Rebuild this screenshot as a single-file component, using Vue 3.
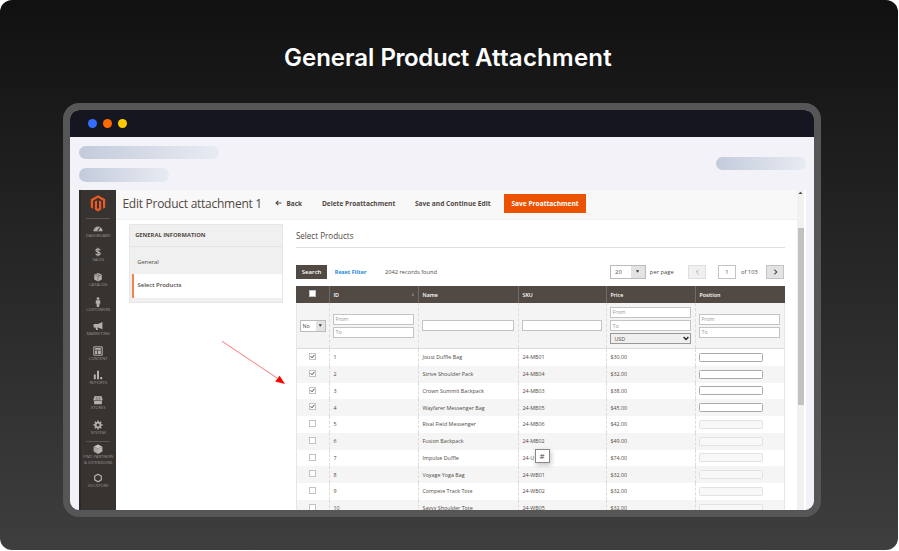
<template>
  <div class="banner">
    <h1 class="headline"><span>General</span> <span class="mid">Product</span> <span class="end">Attachment</span></h1>
    <div class="window">
      <div class="titlebar">
        <span class="dot blue"></span>
        <span class="dot orange"></span>
        <span class="dot yellow"></span>
      </div>
      <div class="placeholders">
        <div class="pills-left">
          <span class="pill long"></span>
          <span class="pill"></span>
        </div>
        <span class="pill right"></span>
      </div>

      <div class="admin">
        <aside class="sidebar">
          <div class="logo">
            <svg width="16" height="17" viewBox="0 0 16 17">
              <path d="M8 .2 15.2 4.3V12.5L13 13.7V5.7L8 2.8 3 5.7V13.7L.8 12.5V4.3Z" fill="#ec5a24" />
              <path d="M4.8 6.6 7 5.4V13.2L8 13.8 9 13.2V5.4L11.2 6.6V14.6L8 16.5 4.8 14.6Z" fill="#ec5a24" />
            </svg>
          </div>
          <template v-for="item in menu" :key="item.label">
            <div class="nav-item" :class="{ divided: item.divided }">
              <svg width="10" height="10" viewBox="0 0 10 10" v-html="item.icon"></svg>
              <span>{{ item.label }}</span>
              <span v-if="item.second">{{ item.second }}</span>
            </div>
          </template>
        </aside>

        <main class="page">
          <header class="page-header">
            <span class="page-title">Edit Product attachment 1</span>
            <span class="back">
              <svg width="7" height="6" viewBox="0 0 7 6">
                <path d="M6.5 3H1M3.3.8 1 3l2.3 2.2" fill="none" stroke="#514943" stroke-width="1.1" />
              </svg>
              <span>Back</span>
            </span>
            <span class="action delete">Delete Proattachment</span>
            <span class="action continue">Save and Continue Edit</span>
            <button class="save">Save Proattachment</button>
          </header>

          <div class="columns">
            <div class="tabs">
              <div class="tabs-title">GENERAL INFORMATION</div>
              <div class="tab">General</div>
              <div class="tab active">Select Products</div>
            </div>

            <section class="content">
              <h2>Select Products</h2>
              <div class="toolbar">
                <button class="search">Search</button>
                <a class="reset">Reset Filter</a>
                <span class="found">2042 records found</span>
                <div class="select size">
                  <span>20</span><i></i>
                </div>
                <span class="per-page">per page</span>
                <span class="pager disabled">
                  <svg width="5" height="6" viewBox="0 0 5 6"><path d="M3.6.8 1.4 3l2.2 2.2" fill="none" stroke="#aaa" stroke-width="1" /></svg>
                </span>
                <span class="page-number">1</span>
                <span class="of">of 103</span>
                <span class="pager">
                  <svg width="5" height="6" viewBox="0 0 5 6"><path d="M1.4.6 3.8 3 1.4 5.4" fill="none" stroke="#514943" stroke-width="1.1" /></svg>
                </span>
              </div>

              <div class="grid">
                <div class="row head">
                  <div class="cell center"><span class="check"></span></div>
                  <div class="cell"><span>ID</span><span class="sort">↓</span></div>
                  <div class="cell">Name</div>
                  <div class="cell">SKU</div>
                  <div class="cell">Price</div>
                  <div class="cell">Position</div>
                </div>
                <div class="row filters">
                  <div class="cell">
                    <div class="select any"><span>No</span><i></i></div>
                  </div>
                  <div class="cell"><div class="range"><span class="field">From</span><span class="field">To</span></div></div>
                  <div class="cell"><span class="field"></span></div>
                  <div class="cell"><span class="field"></span></div>
                  <div class="cell">
                    <div class="price">
                      <span class="field">From</span>
                      <span class="field">To</span>
                      <span class="field usd">USD
                        <svg width="6" height="5" viewBox="0 0 6 5"><path d="M.6 1 3 3.4 5.4 1" fill="none" stroke="#222" stroke-width="1.4" /></svg>
                      </span>
                    </div>
                  </div>
                  <div class="cell"><div class="range"><span class="field">From</span><span class="field">To</span></div></div>
                </div>
                <div v-for="product in products" :key="product.id" class="row product">
                  <div class="cell center">
                    <span class="check">
                      <svg v-if="product.id < 5" width="5" height="5" viewBox="0 0 5 5"><path d="M.6 2.3 2 3.8 4.5.8" fill="none" stroke="#444" stroke-width="1" /></svg>
                    </span>
                  </div>
                  <div class="cell">{{ product.id }}</div>
                  <div class="cell">{{ product.name }}</div>
                  <div class="cell">{{ product.sku }}</div>
                  <div class="cell">${{ product.price }}.00</div>
                  <div class="cell"><span class="position" :class="{ off: product.id > 4 }"></span></div>
                </div>
              </div>
            </section>
          </div>
        </main>

        <div class="scrollbar">
          <svg width="7" height="6" viewBox="0 0 7 6"><path d="M1.4 4 3.5 1.7 5.6 4Z" fill="#505050" /></svg>
          <div class="thumb"></div>
        </div>

        <svg class="arrow" width="66" height="48" viewBox="0 0 66 48">
          <path d="M1 1.2 56 38" stroke="#ff7474" stroke-width="1" />
          <path d="M64 44 54.2 41.6 58.6 35.8Z" fill="#f00" />
        </svg>
        <span class="hash">#</span>
      </div>
    </div>
  </div>
</template>

<script setup>
const box = '<path d="M5 .4 9.2 2.4 5 4.4 .8 2.4Z" fill="#c9c5c0"/><path d="M.6 2.4 5 4.6V9.9L.6 7.6Z" fill="#a9a5a0"/><path d="M9.4 2.4 5 4.6V9.9L9.4 7.6Z" fill="#b7b3ae"/>'

const menu = [
  { label: 'DASHBOARD', icon: '<path d="M.4 8.2A4.6 4.6 0 1 1 9.6 8.2Z" fill="#b3afaa"/><path d="M4.4 7.4 7 4.2 5.6 7.6ZM2 6h.8M3 3.8l.6.6M5 3v.7" fill="#373330" stroke="#373330" stroke-width=".5"/>' },
  { label: 'SALES', icon: '<path d="M7.2 3.2Q6.8 2 5 2 3 2 3 3.4C3 5.4 7.2 4.4 7.2 6.6Q7.2 8 5 8 3 8 2.7 6.7M5 .8V9.2" fill="none" stroke="#b3afaa" stroke-width="1.2"/>' },
  { label: 'CATALOG', icon: '<path d="M5 1 8.8 2.6V7.4L5 9.4 1.2 7.4V2.6Z" fill="#b3afaa"/><path d="M1.2 2.8 5 4.5 8.8 2.8M5 4.5V9.4M3 1.8 7 3.5" fill="none" stroke="#373330" stroke-width=".4"/>' },
  { label: 'CUSTOMERS', icon: '<circle cx="5" cy="1.6" r="1.4" fill="#b3afaa"/><path d="M2.9 3.2H7.1L7.4 6.5H6.5L6.2 9.9H3.8L3.5 6.5H2.6Z" fill="#b3afaa"/>' },
  { label: 'MARKETING', icon: '<path d="M9.4 1V8.2L5 6.5H4.4L5 9H3.1L2.5 6.5H.6V3.1H5Z" fill="#b3afaa"/>' },
  { label: 'CONTENT', icon: '<path d="M.8 .8H9.2V9.2H.8Z" fill="none" stroke="#b3afaa" stroke-width="1"/><path d="M2.1 2.1H7.9V3.7H2.1ZM2.1 4.4H4.2V7.9H2.1ZM5 4.4H7.9V7.9H5Z" fill="#b3afaa"/>' },
  { label: 'REPORTS', icon: '<path d="M.8 4.4H2.8V9.2H.8ZM4 .8H6V9.2H4ZM7.2 7H9.2V9.2H7.2Z" fill="#b3afaa"/>' },
  { label: 'STORES', icon: '<path d="M1.6 1H8.4L9.6 4.4V5.6H.4V4.4ZM1.1 6.1H8.9V9.2H1.1Z" fill="#b3afaa"/><path d="M3.2 1.4V5.4M5 1.4V5.4M6.8 1.4V5.4" stroke="#373330" stroke-width=".4"/>' },
  { label: 'SYSTEM', icon: '<circle cx="5" cy="5" r="2.4" fill="none" stroke="#b3afaa" stroke-width="1.8"/><path d="M5 .4V2M5 8V9.6M.4 5H2M8 5H9.6M1.8 1.8 2.8 2.8M7.2 7.2 8.2 8.2M1.8 8.2 2.8 7.2M7.2 2.8 8.2 1.8" stroke="#b3afaa" stroke-width="1.5"/>' },
  { label: 'FIND PARTNERS', second: '& EXTENSIONS', icon: box, divided: true },
  { label: 'VOCSTORE', icon: '<path d="M5 1.3 8.3 3.1V6.9L5 8.7 1.7 6.9V3.1Z" fill="none" stroke="#b3afaa" stroke-width="1.2"/>' }
]

const products = [
  { id: 1, name: 'Joust Duffle Bag', sku: '24-MB01', price: 30 },
  { id: 2, name: 'Strive Shoulder Pack', sku: '24-MB04', price: 32 },
  { id: 3, name: 'Crown Summit Backpack', sku: '24-MB03', price: 38 },
  { id: 4, name: 'Wayfarer Messenger Bag', sku: '24-MB05', price: 45 },
  { id: 5, name: 'Rival Field Messenger', sku: '24-MB06', price: 42 },
  { id: 6, name: 'Fusion Backpack', sku: '24-MB02', price: 49 },
  { id: 7, name: 'Impulse Duffle', sku: '24-U', price: 74 },
  { id: 8, name: 'Voyage Yoga Bag', sku: '24-WB01', price: 32 },
  { id: 9, name: 'Compete Track Tote', sku: '24-WB02', price: 32 },
  { id: 10, name: 'Savvy Shoulder Tote', sku: '24-WB05', price: 32 }
]
</script>

<style>
body {
  background: #fff;
}
</style>

<style scoped>
* {
  box-sizing: border-box;
}

.banner {
  width: 898px;
  height: 550px;
  border-radius: 12px;
  background: linear-gradient(#111, #3e3e3e);
  overflow: hidden;
  font-family: 'Open Sans', sans-serif;
  color: #514943;
  white-space: nowrap;
}

.headline {
  height: 103px;
  margin: 0;
  padding: 43px 2px 0 0;
  text-align: center;
  font: 600 24px/30px Inter, sans-serif;
  color: #fff;
}

.headline .mid {
  letter-spacing: -.4px;
}

.headline .end {
  letter-spacing: .25px;
}

.window {
  width: 758px;
  height: 414px;
  margin-left: 63px;
  border: 7px solid #565656;
  border-radius: 16px;
  background: #f3f2f8;
  overflow: hidden;
}

.titlebar {
  display: flex;
  align-items: center;
  gap: 5.8px;
  height: 27px;
  padding-left: 18.4px;
  background: #161620;
}

.dot {
  width: 9px;
  height: 9px;
  border-radius: 50%;
}

.blue {
  background: #356dff;
}

.orange {
  background: #ff6a00;
}

.yellow {
  background: #ffcb00;
}

.placeholders {
  display: flex;
  justify-content: space-between;
  height: 53px;
  padding: 8.7px 8.5px 0;
}

.pills-left {
  display: flex;
  flex-direction: column;
  gap: 8.5px;
}

.pill {
  width: 90px;
  height: 13.8px;
  border-radius: 7px;
  background: linear-gradient(90deg, #c3cbdb, #e8ebf2);
}

.pill.long {
  width: 140px;
}

.pill.right {
  margin-top: 11px;
}

.admin {
  position: relative;
  display: flex;
  width: 727px;
  height: 320px;
  margin-left: 9px;
  background: #fff;
}

.sidebar {
  flex: none;
  width: 37.4px;
  padding-right: 1px;
  background: #373330;
  border-left: 2px solid #2d2926;
}

.logo {
  display: flex;
  justify-content: center;
  height: 28.5px;
  margin: 0 5px 3.5px;
  padding-top: 5px;
  border-bottom: 1px solid #5b554d;
}

.nav-item {
  display: flex;
  flex-direction: column;
  align-items: center;
  height: 24.6px;
  padding-top: .8px;
  font-size: 4.1px;
  line-height: 6px;
  color: #9b9690;
}

.nav-item svg {
  flex: none;
}

.nav-item.divided {
  position: relative;
  height: 31.5px;
  margin-top: -2.7px;
  padding-top: 3.8px;
  line-height: 5.6px;
}

.nav-item.divided::before {
  content: '';
  position: absolute;
  top: 0;
  width: 24px;
  height: 1px;
  background: #5b554d;
}

.page {
  flex: none;
  width: 680.6px;
  overflow: hidden;
}

.page-header {
  display: flex;
  align-items: center;
  height: 29.5px;
  padding: 0 0 2px 6px;
  background: #f8f8f8;
  border-bottom: 1px solid #f0f0f0;
  font-size: 6.5px;
  font-weight: 700;
}

.page-header > * {
  flex: none;
}

.page-title {
  width: 152.5px;
  font-size: 12px;
  letter-spacing: -.26px;
  font-weight: 400;
}

.back {
  display: flex;
  align-items: center;
  gap: 4.5px;
  width: 47px;
}

.delete {
  width: 93px;
  font-size: 6.6px;
}

.continue {
  width: 89.5px;
  font-size: 6.6px;
}

button {
  padding: 0;
  border: 0;
  border-radius: 0;
  font: 600 6.3px 'Open Sans', sans-serif;
  color: #fff;
}

.save {
  width: 81.3px;
  height: 19px;
  background: #eb5202;
  font-size: 6.6px;
  font-weight: 700;
}

.columns {
  display: flex;
  align-items: flex-start;
  padding-left: 12.6px;
}

.tabs {
  flex: none;
  width: 154.5px;
  height: 78.5px;
  margin-top: 4.5px;
  background: #f0f0f0;
  border: 1px solid #e6e6e6;
  font-size: 5.9px;
}

.tabs-title {
  height: 21.5px;
  padding-left: 5.2px;
  border-bottom: 1px solid #e3e3e3;
  font-size: 5.8px;
  line-height: 21px;
  font-weight: 700;
}

.tab {
  height: 27.5px;
  padding-left: 7.2px;
  line-height: 31px;
}

.tab.active {
  height: 23.5px;
  margin-left: 2px;
  padding-left: 3.6px;
  border-left: 2px solid #f58350;
  background: #fff;
  line-height: 23px;
  font-weight: 600;
}

.content {
  flex: none;
  width: 489px;
  margin-left: 12.4px;
}

h2 {
  height: 28.5px;
  margin: 0;
  padding-top: 10.4px;
  border-bottom: 1px solid #e0e0e0;
  font-size: 8.05px;
  line-height: 11px;
  font-weight: 400;
}

.toolbar {
  display: flex;
  align-items: center;
  height: 14px;
  margin-top: 16.5px;
  font-size: 5.8px;
}

.toolbar > * {
  flex: none;
}

.search {
  width: 31.5px;
  height: 14px;
  background: #514943;
  font-size: 6px;
}

.reset {
  width: 50.3px;
  margin-left: 7.4px;
  font-size: 5.6px;
  font-weight: 700;
  color: #1688dc;
}

.found {
  width: 225px;
  font-size: 5.7px;
}

.select {
  display: flex;
  align-items: center;
  justify-content: space-between;
  border: 1px solid #bbb;
  background: #fff;
}

.select i {
  display: flex;
  align-items: center;
  justify-content: center;
  width: 14px;
  height: 100%;
  background: #e3e3e3;
}

.select i::after {
  content: '';
  width: 3.4px;
  height: 2.4px;
  background: #41362f;
  clip-path: polygon(0 0, 100% 0, 50% 100%);
}

.size {
  width: 35.5px;
  height: 14px;
  padding-left: 4px;
}

.per-page {
  width: 42.2px;
  padding-left: 4.3px;
}

.pager,
.page-number {
  display: flex;
  align-items: center;
  justify-content: center;
  width: 18.7px;
  height: 14px;
  border: 1px solid #c4c4c4;
  background: #e3e3e3;
}

.pager.disabled {
  background: #f0f0f0;
  border-color: #dedede;
}

.page-number {
  margin-left: 11.2px;
  background: #fff;
}

.of {
  width: 24.8px;
  margin-left: 4.6px;
}

.grid {
  margin-top: 7.5px;
  border-left: 1px solid #e6e6e6;
  border-right: 1px solid #e6e6e6;
  font-size: 5.35px;
}

.row {
  display: grid;
  grid-template-columns: 32.2px 89px 100px 88px 89px 1fr;
}

.cell {
  display: flex;
  align-items: center;
  padding-left: 3.4px;
  border-left: 1px dashed #dcdcdc;
}

.cell:first-child {
  border-left: 0;
}

.cell.center {
  justify-content: center;
  padding: 0 1.4px 0 0;
}

.head {
  height: 17px;
  margin: 0 -1px;
  padding: 0 1px;
  background: #514943;
  color: #fff;
  font-weight: 600;
}

.head .cell {
  justify-content: space-between;
  border-left: 1px solid #716a65;
}

.head .cell.center {
  justify-content: center;
  border: 0;
}

.sort {
  margin: 0 4px 2px 0;
}

.check {
  display: flex;
  align-items: center;
  justify-content: center;
  width: 7px;
  height: 7px;
  margin-bottom: 1.5px;
  border: 1px solid #c2c2c2;
  background: #fff;
}

.filters {
  height: 46px;
  background: #f4f4f4;
  border-bottom: 1px solid #dcdcdc;
}

.any {
  width: 25.5px;
  height: 12px;
  padding-left: 1.2px;
}

.any i {
  width: 9px;
}

.field {
  display: flex;
  align-items: center;
  justify-content: space-between;
  width: calc(100% - 4.2px);
  height: 11.5px;
  padding-left: 1px;
  border: 1px solid #c4c4c4;
  background: #fff;
  color: #9c9895;
}

.range,
.price {
  width: 100%;
  display: flex;
  flex-direction: column;
  gap: 2px;
}

.range .field,
.price .field {
  height: 11px;
}

.price {
  gap: 2.2px;
}

.price .field.usd {
  padding: 0 1px 0 3px;
  border-color: #999;
  background: #efefef;
  color: #514943;
}

.product {
  height: 16.75px;
}

.product:nth-child(even) {
  background: #f5f5f5;
}

.position {
  width: 63.5px;
  height: 9px;
  border: 1px solid #aaa;
  border-radius: 1.5px;
  background: #fff;
}

.position.off {
  border-color: #e2e2e2;
  background: #f8f8f8;
}

.scrollbar {
  width: 7.5px;
  background: #f1f1f1;
}

.scrollbar svg {
  display: block;
}

.thumb {
  width: 6px;
  height: 177px;
  margin: 32px 0 0 .8px;
  background: #c1c1c1;
}

.arrow {
  position: absolute;
  left: 142px;
  top: 150px;
}

.hash {
  position: absolute;
  left: 455.7px;
  top: 259px;
  width: 15px;
  height: 14px;
  border: 1px solid #888;
  background: #fff;
  box-shadow: 1px 2px 5px rgba(0, 0, 0, .25);
  text-align: center;
  font-size: 8px;
  line-height: 12px;
}
</style>
